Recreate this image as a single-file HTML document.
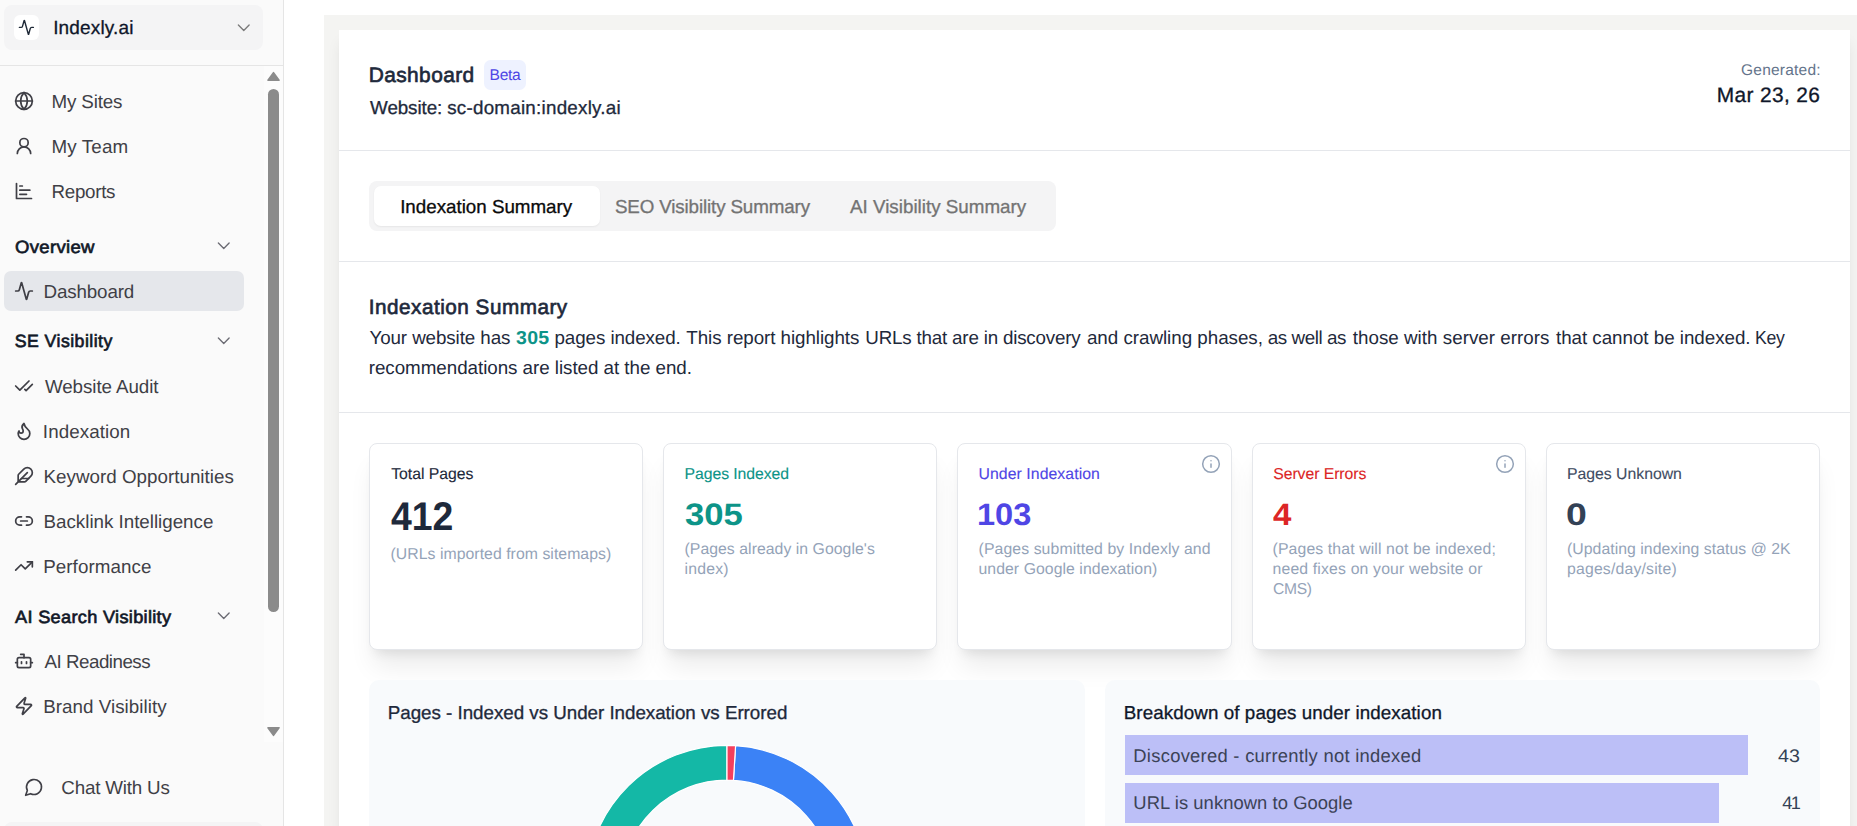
<!DOCTYPE html><html lang="en"><head><meta charset="utf-8"><title>Indexly.ai Dashboard</title><style>
*{box-sizing:border-box}
html,body{margin:0;padding:0}
body{width:1857px;height:826px;overflow:hidden;background:#fff;position:relative;font-family:"Liberation Sans",sans-serif}
.b{position:absolute}
.ic{position:absolute;overflow:visible}
.t{position:absolute;text-rendering:geometricPrecision;line-height:0;white-space:nowrap;height:100px}
.t span{white-space:pre}
.s{display:inline-block;width:0;height:100px}
.card{position:absolute;top:443px;height:207px;width:273.3px;background:#fff;border:1px solid #e5e7eb;border-radius:8px;box-shadow:0 21px 26px -5px rgba(0,0,0,.08),0 8.4px 10.5px -6.3px rgba(0,0,0,.085)}
.hr{position:absolute;left:339px;width:1511px;height:1px;background:#e5e7eb}

</style></head><body>
<!-- main area -->
<div class="b" style="left:324px;top:15px;width:1540px;height:820px;background:#f4f4f2"></div>
<div class="b" style="left:339px;top:30px;width:1511px;height:800px;background:#fff;box-shadow:0 10px 15px -3px rgba(0,0,0,.09),0 4px 6px -4px rgba(0,0,0,.09)"></div>
<div class="hr" style="top:150px"></div>
<div class="hr" style="top:261px"></div>
<div class="hr" style="top:412px"></div>
<div class="b" style="left:484px;top:60px;width:42px;height:30px;border-radius:6.5px;background:#eef2ff"></div>
<div class="b" style="left:369px;top:181px;width:687px;height:50px;border-radius:8px;background:#f4f4f5"></div>
<div class="b" style="left:374px;top:186px;width:226.4px;height:40px;border-radius:7px;background:#fff;box-shadow:0 1px 2px rgba(0,0,0,.06)"></div>
<div class="card" style="left:369px;width:274px"></div>
<div class="card" style="left:663px;width:274px"></div>
<div class="card" style="left:957px;width:275px"></div>
<div class="card" style="left:1252px;width:274px"></div>
<div class="card" style="left:1546px;width:274px"></div>
<div class="b" style="left:369px;top:680px;width:716px;height:160px;border-radius:10px;background:#f8fafc"></div>
<div class="b" style="left:1105px;top:680px;width:715px;height:160px;border-radius:10px;background:#f8fafc"></div>
<div class="b" style="left:1125px;top:735px;width:623px;height:40px;background:#bcbff7"></div>
<div class="b" style="left:1125px;top:783px;width:594px;height:40px;background:#bcbff7"></div>
<svg class="b" style="left:566.7px;top:726px" width="320" height="100" viewBox="-160 -160 320 100">
  <g stroke="#fff" stroke-width="1.2" stroke-linejoin="bevel">
    <path fill="#3b82f6" d="M8.572 -140.338 A140.6 140.6 0 0 1 140.338 8.572 L105.703 6.456 A105.9 105.9 0 0 0 6.456 -105.703 Z"/>
    <path fill="#14b8a6" d="M140.338 8.572 A140.6 140.6 0 1 1 -0.002 -140.600 L-0.002 -105.900 A105.9 105.9 0 1 0 105.703 6.456 Z"/>
    <path fill="#f43f5e" d="M0.000 -140.600 A140.6 140.6 0 0 1 8.572 -140.338 L6.456 -105.703 A105.9 105.9 0 0 0 0.000 -105.900 Z"/>
  </g>
</svg>
<!-- sidebar -->
<div class="b" style="left:0;top:0;width:284px;height:826px;background:#fafafa;border-right:1px solid #e5e5e5"></div>
<div class="b" style="left:4px;top:5px;width:259px;height:45px;border-radius:8px;background:#f4f4f5"></div>
<div class="b" style="left:14px;top:15px;width:25px;height:25px;border-radius:6px;background:#fff"></div>
<div class="b" style="left:0;top:65px;width:283px;height:1px;background:#e5e5e5"></div>
<div class="b" style="left:264px;top:66px;width:19px;height:676px;background:#fcfcfc"></div>
<div class="b" style="left:268px;top:89px;width:11px;height:523px;border-radius:5.5px;background:#8b8b8b"></div>
<svg class="b" style="left:266px;top:70px" width="15" height="13" viewBox="0 0 15 13"><path d="M7.5 2.6 L13 10.3 L2 10.3 Z" fill="#8b8b8b" stroke="#8b8b8b" stroke-width="1.6" stroke-linejoin="round"/></svg>
<svg class="b" style="left:266px;top:725px" width="15" height="13" viewBox="0 0 15 13"><path d="M7.5 10.4 L13 2.7 L2 2.7 Z" fill="#8b8b8b" stroke="#8b8b8b" stroke-width="1.6" stroke-linejoin="round"/></svg>
<div class="b" style="left:4px;top:271px;width:240px;height:40px;border-radius:7px;background:#e5e7eb"></div>
<div class="b" style="left:4px;top:822px;width:259px;height:20px;border-radius:8px;background:#f4f4f5"></div>

<svg class="ic" style="left:17.60px;top:19.00px" width="16.8" height="16.8" viewBox="0 0 24 24" fill="none" stroke="#1f2937" stroke-width="2" stroke-linecap="round" stroke-linejoin="round"><path d="M22 12h-2.48a2 2 0 0 0-1.93 1.46l-2.35 8.36a.25.25 0 0 1-.48 0L9.24 2.18a.25.25 0 0 0-.48 0l-2.35 8.36A2 2 0 0 1 4.49 12H2"/></svg>
<svg class="ic" style="left:232.55px;top:17.25px" width="21.5" height="21.5" viewBox="0 0 24 24" fill="none" stroke="#7a7a7a" stroke-width="1.5" stroke-linecap="round" stroke-linejoin="round"><path d="m6 9 6 6 6-6"/></svg>
<svg class="ic" style="left:14.00px;top:91.00px" width="20" height="20" viewBox="0 0 24 24" fill="none" stroke="#3f3f46" stroke-width="2.05" stroke-linecap="round" stroke-linejoin="round"><circle cx="12" cy="12" r="10"/><path d="M12 2a14.5 14.5 0 0 0 0 20 14.5 14.5 0 0 0 0-20"/><path d="M2 12h20"/></svg>
<svg class="ic" style="left:14.00px;top:136.00px" width="20" height="20" viewBox="0 0 24 24" fill="none" stroke="#3f3f46" stroke-width="2.05" stroke-linecap="round" stroke-linejoin="round"><circle cx="12" cy="8" r="5"/><path d="M20 21a8 8 0 0 0-16 0"/></svg>
<svg class="ic" style="left:14.00px;top:181.00px" width="20" height="20" viewBox="0 0 24 24" fill="none" stroke="#3f3f46" stroke-width="2.05" stroke-linecap="round" stroke-linejoin="round"><path d="M3 3v18h18"/><path d="M7 16h8"/><path d="M7 11h12"/><path d="M7 6h3"/></svg>
<svg class="ic" style="left:213.45px;top:235.45px" width="21.5" height="21.5" viewBox="0 0 24 24" fill="none" stroke="#6b6b73" stroke-width="1.5" stroke-linecap="round" stroke-linejoin="round"><path d="m6 9 6 6 6-6"/></svg>
<svg class="ic" style="left:14.00px;top:281.00px" width="20" height="20" viewBox="0 0 24 24" fill="none" stroke="#3f3f46" stroke-width="2.05" stroke-linecap="round" stroke-linejoin="round"><path d="M22 12h-2.48a2 2 0 0 0-1.93 1.46l-2.35 8.36a.25.25 0 0 1-.48 0L9.24 2.18a.25.25 0 0 0-.48 0l-2.35 8.36A2 2 0 0 1 4.49 12H2"/></svg>
<svg class="ic" style="left:213.45px;top:330.45px" width="21.5" height="21.5" viewBox="0 0 24 24" fill="none" stroke="#6b6b73" stroke-width="1.5" stroke-linecap="round" stroke-linejoin="round"><path d="m6 9 6 6 6-6"/></svg>
<svg class="ic" style="left:14.00px;top:376.00px" width="20" height="20" viewBox="0 0 24 24" fill="none" stroke="#3f3f46" stroke-width="2.05" stroke-linecap="round" stroke-linejoin="round"><path d="M18 6 7 17l-5-5"/><path d="m22 10-7.5 7.5L13 16"/></svg>
<svg class="ic" style="left:14.00px;top:421.00px" width="20" height="20" viewBox="0 0 24 24" fill="none" stroke="#3f3f46" stroke-width="2.05" stroke-linecap="round" stroke-linejoin="round"><path d="M8.5 14.5A2.5 2.5 0 0 0 11 12c0-1.38-.5-2-1-3-1.072-2.143-.224-4.054 2-6 .5 2.5 2 4.9 4 6.5 2 1.6 3 3.5 3 5.5a7 7 0 1 1-14 0c0-1.153.433-2.294 1-3a2.5 2.5 0 0 0 2.500 2.500z"/></svg>
<svg class="ic" style="left:14.00px;top:466.00px" width="20" height="20" viewBox="0 0 24 24" fill="none" stroke="#3f3f46" stroke-width="2.05" stroke-linecap="round" stroke-linejoin="round"><path d="M12.67 19a2 2 0 0 0 1.416-.588l6.154-6.172a6 6 0 0 0-8.49-8.49L5.586 9.914A2 2 0 0 0 5 11.328V18a1 1 0 0 0 1 1z"/><path d="M16 8 2 22"/><path d="M17.5 15H9"/></svg>
<svg class="ic" style="left:14.00px;top:511.00px" width="20" height="20" viewBox="0 0 24 24" fill="none" stroke="#3f3f46" stroke-width="2.05" stroke-linecap="round" stroke-linejoin="round"><path d="M9 17H7A5 5 0 0 1 7 7h2"/><path d="M15 7h2a5 5 0 1 1 0 10h-2"/><path d="M8 12h8"/></svg>
<svg class="ic" style="left:14.00px;top:556.00px" width="20" height="20" viewBox="0 0 24 24" fill="none" stroke="#3f3f46" stroke-width="2.05" stroke-linecap="round" stroke-linejoin="round"><path d="M22 7 13.5 15.500 8.500 10.500 2 17"/><path d="M16 7h6v6"/></svg>
<svg class="ic" style="left:213.45px;top:605.45px" width="21.5" height="21.5" viewBox="0 0 24 24" fill="none" stroke="#6b6b73" stroke-width="1.5" stroke-linecap="round" stroke-linejoin="round"><path d="m6 9 6 6 6-6"/></svg>
<svg class="ic" style="left:14.00px;top:651.00px" width="20" height="20" viewBox="0 0 24 24" fill="none" stroke="#3f3f46" stroke-width="2.05" stroke-linecap="round" stroke-linejoin="round"><path d="M12 8V4H8"/><rect width="16" height="12" x="4" y="8" rx="2"/><path d="M2 14h2"/><path d="M20 14h2"/><path d="M15 13v2"/><path d="M9 13v2"/></svg>
<svg class="ic" style="left:14.00px;top:696.00px" width="20" height="20" viewBox="0 0 24 24" fill="none" stroke="#3f3f46" stroke-width="2.05" stroke-linecap="round" stroke-linejoin="round"><path d="M4 14a1 1 0 0 1-.78-1.63l9.9-10.2a.5.5 0 0 1 .86.46l-1.92 6.02A1 1 0 0 0 13 10h7a1 1 0 0 1 .78 1.63l-9.9 10.2a.5.5 0 0 1-.86-.46l1.92-6.02A1 1 0 0 0 11 14z"/></svg>
<svg class="ic" style="left:23.50px;top:776.70px" width="20" height="20" viewBox="0 0 24 24" fill="none" stroke="#3f3f46" stroke-width="1.95" stroke-linecap="round" stroke-linejoin="round"><path d="M7.9 20A9 9 0 1 0 4 16.1L2 22Z"/></svg>
<svg class="ic" style="left:1200.90px;top:454.00px" width="20" height="20" viewBox="0 0 24 24" fill="none" stroke="#94a3b8" stroke-width="1.8" stroke-linecap="round" stroke-linejoin="round"><circle cx="12" cy="12" r="10"/><path d="M12 16v-4"/><path d="M12 8h.01"/></svg>
<svg class="ic" style="left:1494.90px;top:454.00px" width="20" height="20" viewBox="0 0 24 24" fill="none" stroke="#94a3b8" stroke-width="1.8" stroke-linecap="round" stroke-linejoin="round"><circle cx="12" cy="12" r="10"/><path d="M12 16v-4"/><path d="M12 8h.01"/></svg>
<div class="t" style="left:53.18px;top:-66.00px;font-size:19.0px;font-weight:400;color:#0f172a;letter-spacing:0.147px;-webkit-text-stroke:0.3px currentColor;"><i class="s"></i><span>Indexly.ai</span></div>
<div class="t" style="left:51.56px;top:7.90px;font-size:18.8px;font-weight:400;color:#3f3f46;letter-spacing:-0.157px;"><i class="s"></i><span>My Sites</span></div>
<div class="t" style="left:51.56px;top:52.90px;font-size:18.8px;font-weight:400;color:#3f3f46;letter-spacing:0.129px;"><i class="s"></i><span>My Team</span></div>
<div class="t" style="left:51.56px;top:98.00px;font-size:18.8px;font-weight:400;color:#3f3f46;letter-spacing:-0.308px;"><i class="s"></i><span>Reports</span></div>
<div class="t" style="left:14.70px;top:152.60px;font-size:17.7px;font-weight:400;color:#111827;letter-spacing:0.300px;-webkit-text-stroke:0.65px currentColor;"><i class="s"></i><span style="display:inline-block;transform:scaleX(1.0472);transform-origin:0 100%">Overview</span></div>
<div class="t" style="left:43.56px;top:197.50px;font-size:18.8px;font-weight:400;color:#3f3f46;letter-spacing:-0.144px;"><i class="s"></i><span>Dashboard</span></div>
<div class="t" style="left:14.70px;top:247.40px;font-size:17.7px;font-weight:400;color:#111827;letter-spacing:0.458px;-webkit-text-stroke:0.65px currentColor;"><i class="s"></i><span>SE Visibility</span></div>
<div class="t" style="left:44.96px;top:292.50px;font-size:18.8px;font-weight:400;color:#3f3f46;letter-spacing:-0.082px;"><i class="s"></i><span>Website Audit</span></div>
<div class="t" style="left:42.86px;top:337.50px;font-size:18.8px;font-weight:400;color:#3f3f46;letter-spacing:0.079px;"><i class="s"></i><span>Indexation</span></div>
<div class="t" style="left:43.56px;top:382.50px;font-size:18.8px;font-weight:400;color:#3f3f46;letter-spacing:0.012px;"><i class="s"></i><span>Keyword Opportunities</span></div>
<div class="t" style="left:43.56px;top:427.50px;font-size:18.8px;font-weight:400;color:#3f3f46;letter-spacing:-0.019px;"><i class="s"></i><span>Backlink Intelligence</span></div>
<div class="t" style="left:43.18px;top:472.50px;font-size:18.8px;font-weight:400;color:#3f3f46;letter-spacing:0.072px;"><i class="s"></i><span>Performance</span></div>
<div class="t" style="left:15.34px;top:522.50px;font-size:17.7px;font-weight:400;color:#111827;letter-spacing:0.300px;-webkit-text-stroke:0.65px currentColor;"><i class="s"></i><span style="display:inline-block;transform:scaleX(1.0277);transform-origin:0 100%">AI Search Visibility</span></div>
<div class="t" style="left:44.58px;top:567.50px;font-size:18.8px;font-weight:400;color:#3f3f46;letter-spacing:-0.518px;"><i class="s"></i><span>AI Readiness</span></div>
<div class="t" style="left:43.18px;top:612.50px;font-size:18.8px;font-weight:400;color:#3f3f46;letter-spacing:0.038px;"><i class="s"></i><span>Brand Visibility</span></div>
<div class="t" style="left:61.32px;top:694.00px;font-size:18.8px;font-weight:400;color:#3f3f46;letter-spacing:-0.190px;"><i class="s"></i><span>Chat With Us</span></div>
<div class="t" style="left:368.68px;top:-18.30px;font-size:20.9px;font-weight:400;color:#1e293b;letter-spacing:0.420px;-webkit-text-stroke:0.65px currentColor;"><i class="s"></i><span>Dashboard</span></div>
<div class="t" style="left:489.56px;top:-20.10px;font-size:15.6px;font-weight:400;color:#4f46e5;letter-spacing:-0.311px;"><i class="s"></i><span>Beta</span></div>
<div class="t" style="left:370.08px;top:14.10px;font-size:18.8px;font-weight:400;color:#1e293b;letter-spacing:-0.082px;-webkit-text-stroke:0.3px currentColor;"><i class="s"></i><span>Website:</span></div>
<div class="t" style="left:447.20px;top:14.10px;font-size:18.8px;font-weight:400;color:#1e293b;letter-spacing:0.248px;-webkit-text-stroke:0.3px currentColor;"><i class="s"></i><span>sc-domain:indexly.ai</span></div>
<div class="t" style="left:1741.06px;top:-25.30px;font-size:15.5px;font-weight:400;color:#64748b;letter-spacing:0.222px;"><i class="s"></i><span>Generated:</span></div>
<div class="t" style="left:1716.68px;top:1.70px;font-size:20.9px;font-weight:400;color:#0f172a;letter-spacing:0.374px;-webkit-text-stroke:0.3px currentColor;"><i class="s"></i><span>Mar 23, 26</span></div>
<div class="t" style="left:400.18px;top:113.00px;font-size:18.8px;font-weight:400;color:#0a0a0a;letter-spacing:-0.016px;-webkit-text-stroke:0.3px currentColor;"><i class="s"></i><span>Indexation Summary</span></div>
<div class="t" style="left:614.88px;top:113.00px;font-size:18.8px;font-weight:400;color:#737373;letter-spacing:-0.133px;-webkit-text-stroke:0.3px currentColor;"><i class="s"></i><span>SEO Visibility Summary</span></div>
<div class="t" style="left:850.02px;top:113.00px;font-size:18.8px;font-weight:400;color:#737373;letter-spacing:0.005px;-webkit-text-stroke:0.3px currentColor;"><i class="s"></i><span>AI Visibility Summary</span></div>
<div class="t" style="left:368.74px;top:213.80px;font-size:20.7px;font-weight:400;color:#1e293b;letter-spacing:0.511px;-webkit-text-stroke:0.65px currentColor;"><i class="s"></i><span>Indexation Summary</span></div>
<div class="t" style="left:369.44px;top:243.70px;font-size:18.8px;font-weight:400;color:#1e293b;letter-spacing:-0.092px;"><i class="s"></i><span>Your website has</span></div>
<div class="t" style="left:516.20px;top:243.70px;font-size:18.8px;font-weight:700;color:#0d9488;letter-spacing:0.300px;"><i class="s"></i><span style="display:inline-block;transform:scaleX(1.0400);transform-origin:0 100%">305</span></div>
<div class="t" style="left:554.50px;top:243.70px;font-size:18.8px;font-weight:400;color:#1e293b;letter-spacing:-0.084px;"><i class="s"></i><span>pages indexed.</span></div>
<div class="t" style="left:686.32px;top:243.70px;font-size:18.8px;font-weight:400;color:#1e293b;letter-spacing:-0.059px;"><i class="s"></i><span>This report highlights</span></div>
<div class="t" style="left:865.30px;top:243.70px;font-size:18.8px;font-weight:400;color:#1e293b;letter-spacing:-0.193px;"><i class="s"></i><span>URLs that are in discovery</span></div>
<div class="t" style="left:1086.94px;top:243.70px;font-size:18.8px;font-weight:400;color:#1e293b;letter-spacing:-0.024px;"><i class="s"></i><span>and crawling phases,</span></div>
<div class="t" style="left:1267.76px;top:243.70px;font-size:18.8px;font-weight:400;color:#1e293b;letter-spacing:-0.423px;"><i class="s"></i><span>as well as</span></div>
<div class="t" style="left:1352.76px;top:243.70px;font-size:18.8px;font-weight:400;color:#1e293b;letter-spacing:0.021px;"><i class="s"></i><span>those with server errors</span></div>
<div class="t" style="left:1555.96px;top:243.70px;font-size:18.8px;font-weight:400;color:#1e293b;letter-spacing:-0.031px;"><i class="s"></i><span>that cannot be indexed.</span></div>
<div class="t" style="left:1754.74px;top:243.70px;font-size:18.8px;font-weight:400;color:#1e293b;letter-spacing:-0.300px;"><i class="s"></i><span style="display:inline-block;transform:scaleX(0.9416);transform-origin:0 100%">Key</span></div>
<div class="t" style="left:368.74px;top:273.90px;font-size:18.8px;font-weight:400;color:#1e293b;letter-spacing:-0.039px;"><i class="s"></i><span>recommendations are listed at the end.</span></div>
<div class="t" style="left:391.20px;top:379.00px;font-size:15.8px;font-weight:400;color:#1e293b;letter-spacing:-0.034px;-webkit-text-stroke:0.12px currentColor;"><i class="s"></i><span>Total Pages</span></div>
<div class="t" style="left:391.26px;top:430.10px;font-size:40.0px;font-weight:700;color:#1e293b;letter-spacing:0.000px;"><i class="s"></i><span style="display:inline-block;transform:scaleX(0.9342);transform-origin:0 100%">412</span></div>
<div class="t" style="left:390.50px;top:459.00px;font-size:15.8px;font-weight:400;color:#94a3b8;letter-spacing:0.046px;"><i class="s"></i><span>(URLs imported from sitemaps)</span></div>
<div class="t" style="left:684.50px;top:379.00px;font-size:15.8px;font-weight:400;color:#0d9488;letter-spacing:-0.066px;-webkit-text-stroke:0.12px currentColor;"><i class="s"></i><span>Pages Indexed</span></div>
<div class="t" style="left:684.82px;top:424.50px;font-size:31.0px;font-weight:700;color:#0d9488;letter-spacing:0.000px;"><i class="s"></i><span style="display:inline-block;transform:scaleX(1.1184);transform-origin:0 100%">305</span></div>
<div class="t" style="left:684.50px;top:454.10px;font-size:15.8px;font-weight:400;color:#94a3b8;letter-spacing:0.044px;"><i class="s"></i><span>(Pages already in Google&#x27;s</span></div>
<div class="t" style="left:684.50px;top:473.90px;font-size:15.8px;font-weight:400;color:#94a3b8;letter-spacing:0.206px;"><i class="s"></i><span>index)</span></div>
<div class="t" style="left:978.50px;top:379.00px;font-size:15.8px;font-weight:400;color:#4f46e5;letter-spacing:0.070px;-webkit-text-stroke:0.12px currentColor;"><i class="s"></i><span>Under Indexation</span></div>
<div class="t" style="left:977.10px;top:424.50px;font-size:31.0px;font-weight:700;color:#4f46e5;letter-spacing:0.000px;"><i class="s"></i><span style="display:inline-block;transform:scaleX(1.0504);transform-origin:0 100%">103</span></div>
<div class="t" style="left:978.56px;top:454.10px;font-size:15.8px;font-weight:400;color:#94a3b8;letter-spacing:0.092px;"><i class="s"></i><span>(Pages submitted by Indexly and</span></div>
<div class="t" style="left:978.50px;top:473.90px;font-size:15.8px;font-weight:400;color:#94a3b8;letter-spacing:0.058px;"><i class="s"></i><span>under Google indexation)</span></div>
<div class="t" style="left:1273.20px;top:379.00px;font-size:15.8px;font-weight:400;color:#dc2626;letter-spacing:-0.063px;-webkit-text-stroke:0.12px currentColor;"><i class="s"></i><span>Server Errors</span></div>
<div class="t" style="left:1273.20px;top:424.50px;font-size:31.0px;font-weight:700;color:#dc2626;letter-spacing:0.000px;"><i class="s"></i><span style="display:inline-block;transform:scaleX(1.0667);transform-origin:0 100%">4</span></div>
<div class="t" style="left:1272.56px;top:454.10px;font-size:15.8px;font-weight:400;color:#94a3b8;letter-spacing:0.120px;"><i class="s"></i><span>(Pages that will not be indexed;</span></div>
<div class="t" style="left:1272.50px;top:473.90px;font-size:15.8px;font-weight:400;color:#94a3b8;letter-spacing:0.158px;"><i class="s"></i><span>need fixes on your website or</span></div>
<div class="t" style="left:1273.20px;top:493.70px;font-size:15.8px;font-weight:400;color:#94a3b8;letter-spacing:-0.300px;"><i class="s"></i><span style="display:inline-block;transform:scaleX(0.9890);transform-origin:0 100%">CMS)</span></div>
<div class="t" style="left:1567.00px;top:379.00px;font-size:15.8px;font-weight:400;color:#3f4d63;letter-spacing:-0.011px;-webkit-text-stroke:0.12px currentColor;"><i class="s"></i><span>Pages Unknown</span></div>
<div class="t" style="left:1566.36px;top:424.50px;font-size:31.0px;font-weight:700;color:#334155;letter-spacing:0.000px;"><i class="s"></i><span style="display:inline-block;transform:scaleX(1.2070);transform-origin:0 100%">0</span></div>
<div class="t" style="left:1567.06px;top:454.10px;font-size:15.8px;font-weight:400;color:#94a3b8;letter-spacing:0.037px;"><i class="s"></i><span>(Updating indexing status @ 2K</span></div>
<div class="t" style="left:1567.00px;top:473.90px;font-size:15.8px;font-weight:400;color:#94a3b8;letter-spacing:0.181px;"><i class="s"></i><span>pages/day/site)</span></div>
<div class="t" style="left:387.74px;top:619.30px;font-size:18.8px;font-weight:400;color:#1e293b;letter-spacing:-0.028px;-webkit-text-stroke:0.3px currentColor;"><i class="s"></i><span>Pages - Indexed vs Under Indexation vs Errored</span></div>
<div class="t" style="left:1123.74px;top:618.80px;font-size:18.8px;font-weight:400;color:#0f172a;letter-spacing:0.082px;-webkit-text-stroke:0.3px currentColor;"><i class="s"></i><span>Breakdown of pages under indexation</span></div>
<div class="t" style="left:1133.30px;top:661.70px;font-size:18.4px;font-weight:400;color:#3b4256;letter-spacing:0.269px;"><i class="s"></i><span>Discovered - currently not indexed</span></div>
<div class="t" style="left:1133.30px;top:709.00px;font-size:18.4px;font-weight:400;color:#3b4256;letter-spacing:0.059px;"><i class="s"></i><span>URL is unknown to Google</span></div>
<div class="t" style="left:1778.38px;top:661.70px;font-size:18.2px;font-weight:400;color:#334155;letter-spacing:0.000px;"><i class="s"></i><span style="display:inline-block;transform:scaleX(1.0833);transform-origin:0 100%">43</span></div>
<div class="t" style="left:1782.37px;top:709.00px;font-size:18.2px;font-weight:400;color:#334155;letter-spacing:-1.600px;"><i class="s"></i><span>41</span></div>
</body></html>
